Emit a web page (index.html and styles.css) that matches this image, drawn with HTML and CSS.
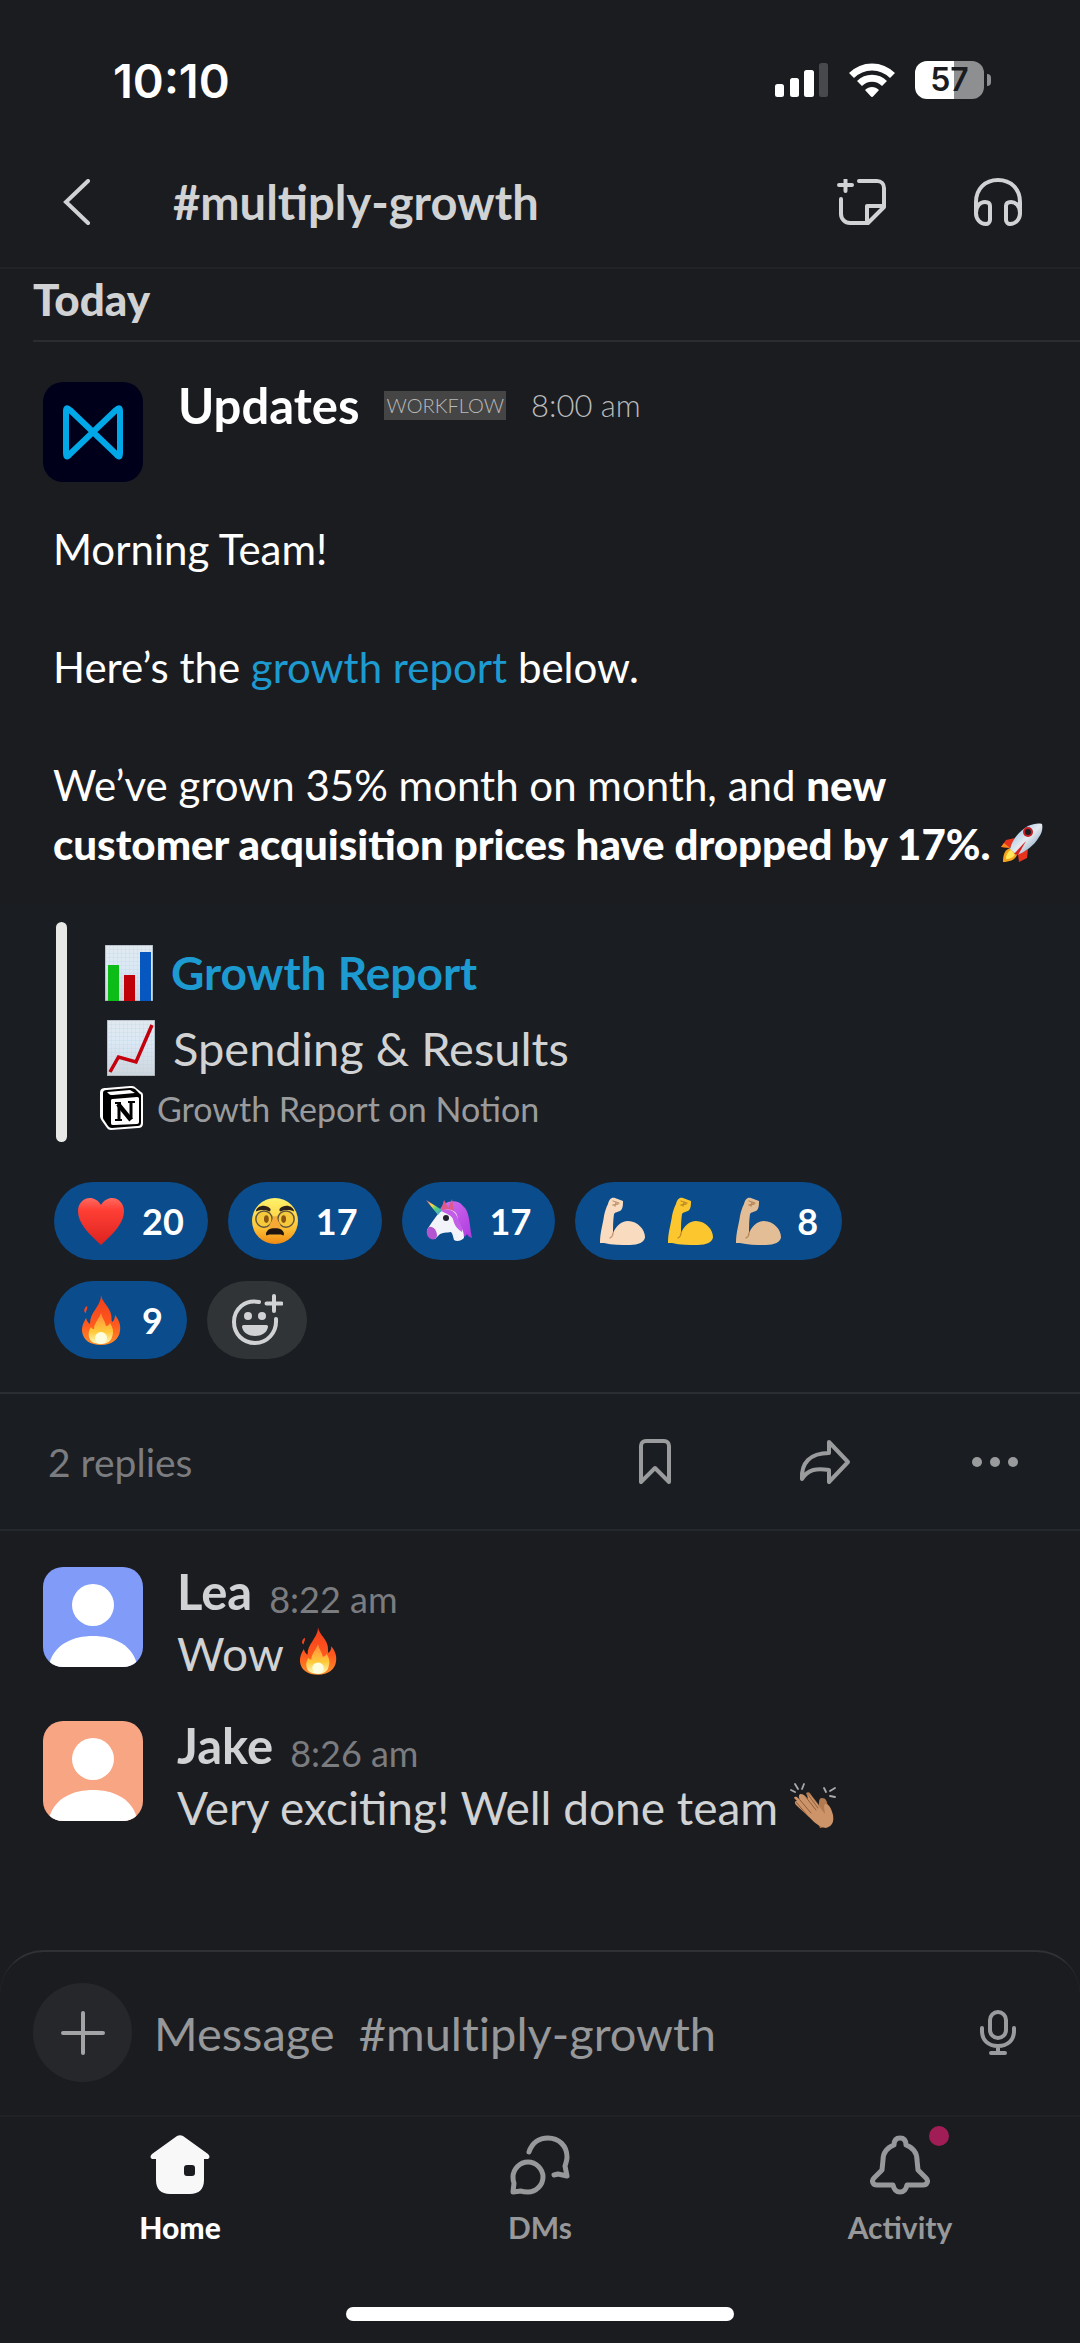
FILE: index.html
```
<!DOCTYPE html>
<html lang="en">

<head>
    <meta charset="UTF-8">
    <meta name="viewport" content="width=device-width, initial-scale=1.0">
    <title>#multiply-growth</title>
    <link rel="stylesheet" href="styles.css">
</head>

<body>

    <!-- Shared emoji drawings -->
    <svg class="defs" aria-hidden="true">
        <defs>
            <linearGradient id="gHeart" x1="0" y1="0" x2="0" y2="1">
                <stop offset="0" stop-color="#ff6a60" />
                <stop offset=".25" stop-color="#ff3f35" />
                <stop offset="1" stop-color="#dc2320" />
            </linearGradient>
            <linearGradient id="gFace" x1="0" y1="0" x2="0" y2="1">
                <stop offset="0" stop-color="#fff36b" />
                <stop offset=".6" stop-color="#ffc93c" />
                <stop offset="1" stop-color="#f08a12" />
            </linearGradient>
            <linearGradient id="gFire" x1="0" y1="0" x2="0" y2="1">
                <stop offset="0" stop-color="#f23c1c" />
                <stop offset=".6" stop-color="#ff5a1e" />
                <stop offset="1" stop-color="#ff8f2a" />
            </linearGradient>
            <linearGradient id="gFlame" x1="0" y1="0" x2="0" y2="1">
                <stop offset="0" stop-color="#ff8a3c" />
                <stop offset=".6" stop-color="#ffc93a" />
                <stop offset="1" stop-color="#fffbc0" />
            </linearGradient>
            <linearGradient id="gMane" x1="0" y1="0" x2="1" y2="1">
                <stop offset="0" stop-color="#d070f0" />
                <stop offset="1" stop-color="#b03ade" />
            </linearGradient>
            <linearGradient id="gHorn" x1="0" y1="0" x2="1" y2="1">
                <stop offset="0" stop-color="#f0609a" />
                <stop offset=".35" stop-color="#ffd84a" />
                <stop offset=".6" stop-color="#4fd07a" />
                <stop offset="1" stop-color="#4a9bf0" />
            </linearGradient>
            <linearGradient id="gRocket" x1="0" y1="0" x2="1" y2="1">
                <stop offset="0" stop-color="#7ab2e6" />
                <stop offset=".5" stop-color="#e6eaee" />
                <stop offset="1" stop-color="#5c87b8" />
            </linearGradient>
            <linearGradient id="gPaper" x1="0" y1="0" x2="0" y2="1">
                <stop offset="0" stop-color="#e2e9ef" />
                <stop offset=".4" stop-color="#dbe9f5" />
                <stop offset="1" stop-color="#ced5dc" />
            </linearGradient>
            <pattern id="gridLines" width="4" height="4" patternUnits="userSpaceOnUse">
                <path d="M4 0H0V4" fill="none" stroke="#b9cfe2" stroke-width=".5" />
            </pattern>
        </defs>

        <symbol id="fire" viewBox="0 0 40 50">
            <path fill="url(#gFire)" d="M20 0c1 7 8 11 10 19 1 3 0 6 1 8 2-1 3-4 3-7 4 5 6 10 5 16-1 8-8 14-19 14S2 45 1 36c0-6 2-9 4-13 1 3 2 5 4 6 0-6 2-10 5-14 3-5 6-9 6-15z" />
            <path fill="#f4461e" d="M6 11c1 3-1 4-1 7-3-1-2-5 1-7z" />
            <path fill="url(#gFlame)" d="M20 18c1 5 4 8 5 13 2 0 3-1 4-3 3 5 4 9 2 14-1 4-5 7-11 7S9 47 8 42c-1-4 0-7 2-10 1 2 2 2 3 2 0-6 5-10 7-16z" />
            <ellipse cx="20" cy="43" rx="6" ry="6" fill="#fffde0" />
        </symbol>

        <symbol id="arm" viewBox="0 0 46 50">
            <path fill="currentColor" d="M1 47C1 36 4 28 5 20c1-5 2-8 4-12 1-4 3-7 7-6l8 3c0 4 0 8-3 10-2 1-5 1-6 3-1 7-1 13-1 19 3-7 8-12 15-12 10 0 17 9 17 16 0 5-7 8-15 8-9 0-18 0-26-2z" />
            <path fill="none" stroke="#8a5420" stroke-opacity=".5" stroke-width="1.300" stroke-linecap="round" d="M14 5l6 2M14 9l5-1M17 6l-1 4M14 37c0 2-1 4-3 5" />
        </symbol>

        <symbol id="person" viewBox="0 0 100 100">
            <circle cx="50" cy="38" r="21" fill="#fff" />
            <path fill="#fff" d="M7 94C13 77 30 69 50 69s37 8 43 25v6H7z" />
        </symbol>
    </svg>

    <div class="screen">

        <!-- Phone status bar -->
        <div class="status-bar">
            <div class="clock">10:10</div>
            <div class="status-icons">
                <svg class="signal" viewBox="0 0 54 34" fill="#fff">
                    <rect x="0" y="21" width="9" height="13" rx="2.5" />
                    <rect x="15" y="15" width="9" height="19" rx="2.5" />
                    <rect x="29" y="7" width="10" height="27" rx="2.5" />
                    <rect x="44" y="0" width="9" height="34" rx="2.5" fill="#48494c" />
                </svg>
                <svg class="wifi" viewBox="0 0 46 34" fill="none" stroke="#fff">
                    <path stroke-width="7" d="M2.500 12.500C14 1 32 1 43.500 12.500" />
                    <path stroke-width="7" d="M10.500 20.500c7-7 18-7 25 0" />
                    <path fill="#fff" stroke="none" d="M16 27c4-4 10-4 14 0l-5.500 6c-1 1.300-2 1.300-3 0z" />
                </svg>
                <div class="battery">57</div>
            </div>
        </div>

        <!-- Channel header -->
        <header class="channel-header">
            <button class="icon-button back" aria-label="Back">
                <svg width="28" height="46" viewBox="0 0 28 46" fill="none" stroke="#d1d2d3" stroke-width="4" stroke-linecap="round">
                    <path d="M25 2L3 23l22 21" />
                </svg>
            </button>
            <h1>#multiply-growth</h1>
            <button class="icon-button" aria-label="New canvas">
                <svg width="50" height="46" viewBox="0 0 50 46" fill="none" stroke="#d1d2d3" stroke-width="4" stroke-linecap="round" stroke-linejoin="round">
                    <path d="M2 6h13M8.500 1v11" />
                    <path d="M22 2H40c4 0 7 3 7 7v19L31 44H13c-5 0-9-4-9-9V20" />
                    <path d="M30 43V27h16" />
                </svg>
            </button>
            <button class="icon-button" aria-label="Huddle">
                <svg width="50" height="48" viewBox="0 0 50 48" fill="none" stroke="#d1d2d3" stroke-width="4" stroke-linecap="round">
                    <path d="M3 35V24C3 11 12 2 25 2s22 9 22 22v11" />
                    <path d="M3 35c0-7 4-11 9-11 3 0 5 1 5 4v14c0 2-2 4-4 4-6 0-10-5-10-11zM47 35c0-7-4-11-9-11-3 0-5 1-5 4v14c0 2 2 4 4 4 6 0 10-5 10-11z" />
                </svg>
            </button>
        </header>

        <main>
            <h2 class="day">Today</h2>

            <article class="post">
                <div class="post-head">
                    <svg class="avatar workflow-avatar" viewBox="0 0 100 100" fill="none" stroke="#00a8e8" stroke-width="6" stroke-linejoin="round">
                        <path d="M27 28c-3-3-4-2-4 1v42c0 4 1 5 4 1l46-44c3-3 4-2 4 1v42c0 4-1 5-4 1z" />
                    </svg>
                    <div class="post-meta">
                        <span class="name post-name">Updates</span>
                        <span class="badge">WORKFLOW</span>
                        <time class="post-time">8:00 am</time>
                    </div>
                </div>

                <div class="post-text">
                    <p>Morning Team!</p>
                    <p>Here’s the <a href="#">growth report</a> below.</p>
                    <p>We’ve grown 35% month on month, and <strong>new customer acquisition prices have dropped by 17%.</strong>
                        <svg class="rocket" viewBox="0 0 42 40">
                            <path fill="#e8341c" d="M14 15L5 17 0 24l9 1zM27 26l-1 9-8 4-1-8z" />
                            <path fill="#f58a1e" d="M0 24l3-4 6 5z" />
                            <path fill="#f5a31e" d="M9 25c-6 2-7 8-7 14 6 0 12-2 14-7z" />
                            <path fill="#ffe95a" d="M10 27c-4 2-5 6-5 9 4 0 8-2 9-5z" />
                            <path fill="url(#gRocket)" d="M9 26c2-9 9-18 18-23 5-2 10-3 14-2 1 4 0 9-3 13-5 9-14 15-22 18z" />
                            <path fill="#d6211e" d="M13 31l12-13-8 14z" />
                            <circle cx="27" cy="9" r="5" fill="#c81e24" />
                            <circle cx="27" cy="9" r="3" fill="#191c22" />
                        </svg>
                    </p>
                </div>
            </article>

            <div class="post-extras">
                <section class="attachment">
                    <div class="attachment-row attachment-title">
                        <svg class="chart" viewBox="0 0 48 56">
                            <path fill="url(#gPaper)" stroke="#8d9499" d="M0 0h48v56H0z" />
                            <path fill="url(#gridLines)" d="M0 0h48v56H0z" />
                            <path fill="#0dbd17" d="M3 20h11v36H3z" />
                            <path fill="#c00008" d="M19 30h11v26H19z" />
                            <path fill="#0757c0" d="M35 7h11v49H35z" />
                        </svg>
                        <a href="#">Growth Report</a>
                    </div>
                    <div class="attachment-row attachment-body">
                        <svg class="chart" viewBox="0 0 48 56">
                            <path fill="url(#gPaper)" stroke="#8d9499" d="M0 0h48v56H0z" />
                            <path fill="url(#gridLines)" d="M0 0h48v56H0z" />
                            <path fill="none" stroke="#c3000c" stroke-width="3.500" d="M3 52l8.500-15L29 42 45 5" />
                        </svg>
                        <span>Spending &amp; Results</span>
                    </div>
                    <div class="attachment-row attachment-source">
                        <svg class="notion" viewBox="0 0 43 44">
                            <path fill="#fff" d="M0 7c0-4 2-5 6-5l24-2c3 0 4 0 6 2l5 4c2 1 2 2 2 5v26c0 4-2 5-5 5l-27 2c-2 0-3-1-4-2l-5-7c-1-2-2-3-2-5z" />
                            <path fill="#000" d="M3 7c0-2 1-3 4-3l23-2c2 0 3 0 5 1l5 5c1 0 1 1 1 3v25c0 3-1 4-4 4l-25 2c-2 0-3-1-4-2l-4-6c-1-1-1-2-1-4z" />
                            <path fill="#fff" d="M7 6l23-2 5 3-22 2c-2 0-3 0-4-1zM11 15c0-2 1-2 2-2l24-2c2 0 2 1 2 2v23c0 1-1 2-2 2l-23 1c-2 0-3 0-3-2z" />
                            <path fill="none" stroke="#000" stroke-width="3" d="M19 33V18M31 16v17" />
                            <path fill="none" stroke="#000" stroke-width="4.500" d="M18 18l13 16" />
                            <path fill="none" stroke="#000" stroke-width="2" d="M15 17h6M28 16h7M15 34h7" />
                        </svg>
                        <span>Growth Report on Notion</span>
                    </div>
                </section>

                <div class="reactions">
                    <button class="reaction">
                        <svg viewBox="0 0 46 50">
                            <path fill="url(#gHeart)" d="M23 9C26 4 30 2 34 2c7 0 12 6 12 13 0 12-10 22-23 34C10 37 0 27 0 15 0 8 5 2 12 2c4 0 8 2 11 7z" />
                        </svg>
                        20
                    </button>
                    <button class="reaction">
                        <svg viewBox="0 0 48 48">
                            <circle cx="24" cy="24" r="24" fill="url(#gFace)" />
                            <circle cx="12.500" cy="22" r="8.500" fill="#f6c93c" stroke="#5f553c" stroke-width="1.500" />
                            <circle cx="35.500" cy="22" r="8.500" fill="#f6c93c" stroke="#5f553c" stroke-width="1.500" />
                            <ellipse cx="15" cy="22" rx="2.500" ry="4" fill="#8a5412" />
                            <ellipse cx="33" cy="22" rx="2.500" ry="4" fill="#8a5412" />
                            <path fill="#2d221b" d="M4 14C5 8 14 6 19 11c1 2 0 3-1 3-5-2-8-2-14 0zM44 14C43 8 34 6 29 11c-1 2 0 3 1 3 5-2 8-2 14 0z" />
                            <path fill="#f7a935" d="M22 19h4c0 5 4 7 4 11 0 3-3 4-6 4s-6-1-6-4c0-4 4-6 4-11z" />
                            <path fill="#1f1612" d="M17 33c4-2 10-2 14 0 2 2 3 4 2 6-2-1-4-1-6-1h-6c-2 0-4 0-6 1-1-2 0-4 2-6z" />
                        </svg>
                        17
                    </button>
                    <button class="reaction">
                        <svg viewBox="0 0 46 48">
                            <path fill="url(#gMane)" d="M14 13C17 4 31 1 37 9c7 5 6 18 9 32-3-1-4-2-5-4l-2 3-12-16z" />
                            <path fill="#e05a86" d="M15 13l3-10 5 9zM22 12l4-10 2 12z" />
                            <path fill="#f3f3fa" d="M12 17c4-5 12-6 17-2 4 4 2 10 5 14 3 3 4 8 4 12-3 3-7 4-10 2-1-3-1-6-3-8-4 1-9 0-12 3l-4 4C5 41 1 38 1 33c3-5 7-11 11-16z" />
                            <path fill="#b455d0" d="M3 30c4-1 8 3 8 9-1 3-3 4-6 3-3-1-5-5-4-9z" />
                            <path fill="#c35ee6" d="M15 14c9-4 15 1 17 8 1 4 5 7 4 13-6-4-8-8-9-13-2-4-6-5-12-8z" />
                            <path fill="url(#gHorn)" d="M0 3l16 10-4 5z" />
                            <circle cx="20" cy="21" r="3" fill="#231f2e" />
                        </svg>
                        17
                    </button>
                    <button class="reaction reaction-arms">
                        <span class="arms">
                            <svg class="tone-light"><use href="#arm" /></svg>
                            <svg class="tone-yellow"><use href="#arm" /></svg>
                            <svg class="tone-medium"><use href="#arm" /></svg>
                        </span>
                        8
                    </button>
                    <button class="reaction">
                        <svg><use href="#fire" /></svg>
                        9
                    </button>
                    <button class="reaction add-reaction" aria-label="Add reaction">
                        <svg viewBox="0 0 52 52" fill="none" stroke="#d1d2d3" stroke-width="4" stroke-linecap="round">
                            <path d="M28 8C14 5 3 15 3 28c0 12 9 21 21 21s22-10 21-24" />
                            <path d="M43 2v15M35.500 9.500h15" />
                            <path fill="#d1d2d3" stroke="none" d="M13 31h22c2 0 2 1 2 2-1 6-7 9-13 9s-12-3-13-9c0-1 0-2 2-2z" />
                            <circle cx="17" cy="22" r="4" fill="#d1d2d3" stroke="none" />
                            <circle cx="31" cy="22" r="4" fill="#d1d2d3" stroke="none" />
                        </svg>
                    </button>
                </div>

                <div class="actions">
                    <span class="replies-count">2 replies</span>
                    <button class="icon-button" aria-label="Save">
                        <svg width="34" height="46" viewBox="0 0 34 46" fill="none" stroke="#9a9b9d" stroke-width="4" stroke-linejoin="round">
                            <path d="M3 43V7c0-3 2-5 5-5h18c3 0 5 2 5 5v36L17 29z" />
                        </svg>
                    </button>
                    <button class="icon-button" aria-label="Share">
                        <svg width="52" height="46" viewBox="0 0 52 46" fill="none" stroke="#9a9b9d" stroke-width="4" stroke-linejoin="round">
                            <path d="M30 3l19 20-19 20V31c-12-2-21-1-27 9C2 24 11 14 30 14z" />
                        </svg>
                    </button>
                    <button class="icon-button" aria-label="More">
                        <svg width="48" height="46" viewBox="0 0 48 46" fill="#9a9b9d">
                            <circle cx="6" cy="23" r="5" />
                            <circle cx="24" cy="23" r="5" />
                            <circle cx="42" cy="23" r="5" />
                        </svg>
                    </button>
                </div>
            </div>

            <section class="replies">
                <article class="reply">
                    <svg class="avatar avatar-lea"><use href="#person" /></svg>
                    <div>
                        <div class="reply-meta"><span class="name">Lea</span><time>8:22 am</time></div>
                        <p>Wow <svg class="reply-fire"><use href="#fire" /></svg></p>
                    </div>
                </article>
                <article class="reply">
                    <svg class="avatar avatar-jake"><use href="#person" /></svg>
                    <div>
                        <div class="reply-meta"><span class="name">Jake</span><time>8:26 am</time></div>
                        <p>Very exciting! Well done team
                            <svg class="reply-clap" viewBox="0 0 46 46">
                                <path fill="none" stroke="#a9aaad" stroke-width="1.800" stroke-linecap="round" d="M1 7l4 2M5 1l3 5M14 1l-2 5M45 5l-5 3M40 13l5 1M36 9l-2-4" />
                                <path fill="#b27a50" d="M16 10c3-2 4 0 6 3l7 9c0-4 0-7 3-7 4 0 5 3 6 9l2 12c-1 5-6 9-10 9z" />
                                <path fill="#cc9468" d="M4 15c1-2 3-1 4 0l2 2c-2-4-1-6 1-6s3 1 4 2l3 3c-1-4 1-5 3-3l14 18c0-3-2-8 0-10 4-1 7 6 8 11 1 6 0 11-7 13-7-1-12-6-17-11L6 22c-2-3-1-4 1-4z" />
                                <path fill="none" stroke="#8f5c38" stroke-width="1" stroke-linecap="round" d="M10 17l11 13M15 13l11 14M6 19l11 13M19 13l9 12" />
                            </svg>
                        </p>
                    </div>
                </article>
            </section>
        </main>

        <!-- Composer and tabs -->
        <footer>
            <div class="composer">
                <button class="attach" aria-label="Attach">
                    <svg width="44" height="44" viewBox="0 0 44 44" fill="none" stroke="#a3a4a6" stroke-width="4" stroke-linecap="round">
                        <path d="M22 2v40M2 22h40" />
                    </svg>
                </button>
                <input type="text" aria-label="Message" placeholder="Message  #multiply-growth">
                <button class="icon-button" aria-label="Record audio">
                    <svg width="38" height="46" viewBox="0 0 38 46" fill="none" stroke="#9a9b9d" stroke-width="4" stroke-linecap="round">
                        <rect x="11" y="2" width="16" height="26" rx="8" />
                        <path d="M3 18v3c0 9 6 15 16 15s16-6 16-15v-3M19 36v7M12 43h14" />
                    </svg>
                </button>
            </div>

            <nav class="tabs">
                <a href="#" class="tab active">
                    <svg viewBox="0 0 60 60" fill="#f8f8f8">
                        <path fill-rule="evenodd" d="M27 1c2-1 4-1 6 0l25 18c2 2 2 4 0 5h-4v21c0 9-5 14-14 14H20C11 59 6 54 6 45V24H2c-2-1-2-3 0-5zM37 30c-2 0-3 1-3 3v5c0 2 1 3 3 3h5c2 0 3-1 3-3v-5c0-2-1-3-3-3z" />
                    </svg>
                    Home
                </a>
                <a href="#" class="tab">
                    <svg viewBox="0 0 60 60" fill="none" stroke="#97989a" stroke-width="5" stroke-linecap="round" stroke-linejoin="round">
                        <path d="M19 17C22 8 29 3 38 3c11 0 19 8 19 19 0 3-1 6-2 9l2 10-9-2-4 1" />
                        <path d="M18 27c8 0 15 7 15 15s-7 15-15 15c-3 0-5 0-7-1l-8 1 1-9c-1-2-1-4-1-6 0-8 7-15 15-15z" />
                    </svg>
                    DMs
                </a>
                <a href="#" class="tab">
                    <svg viewBox="0 0 60 60" fill="none" stroke="#97989a" stroke-width="5" stroke-linecap="round" stroke-linejoin="round">
                        <path d="M24 10c0-5 2-7 6-7s6 2 6 7c8 3 11 9 11 15l1 10 8 8c3 3 1 7-3 7H37c-1 5-3 7-7 7s-6-2-7-7H7c-4 0-6-4-3-7l8-8 1-10c0-6 3-12 11-15z" />
                    </svg>
                    Activity
                    <span class="unread-dot"></span>
                </a>
            </nav>

            <div class="home-indicator"></div>
        </footer>
    </div>

</body>

</html>
```

FILE: styles.css
```
* {
    box-sizing: border-box;
}

body {
    margin: 0;
    background-color: #1b1c20;
    color: #d1d2d3;
    font-family: Lato, "Liberation Sans", sans-serif;
}

h1,
h2,
p {
    margin: 0;
}

a {
    color: #1d9bd1;
    text-decoration: none;
}

svg {
    display: block;
    flex-shrink: 0;
}

button {
    border: none;
    background: none;
    padding: 0;
    font-family: inherit;
    color: inherit;
    cursor: pointer;
}

.defs {
    position: absolute;
    width: 0;
    height: 0;
}

.screen {
    min-height: 100vh;
    display: flex;
    flex-direction: column;
}

/* Status bar */
.status-bar {
    display: flex;
    justify-content: space-between;
    align-items: center;
    padding: 52px 88px 0 113px;
    height: 108px;
    color: #fff;
    font-family: Inter, sans-serif;
    font-weight: 600;
}

.clock {
    font-size: 47px;
}

.status-icons {
    display: flex;
    align-items: center;
    gap: 20px;
}

.signal {
    width: 54px;
    height: 34px;
}

.wifi {
    width: 46px;
    height: 34px;
}

.battery {
    position: relative;
    width: 69px;
    height: 38px;
    margin-right: 8px;
    border-radius: 12px;
    background: linear-gradient(to right, #fff 57%, #8e8f91 57%);
    color: #1b1c20;
    font-size: 32px;
    line-height: 38px;
    text-align: center;
}

.battery::after {
    content: "";
    position: absolute;
    right: -7px;
    top: 13px;
    width: 4px;
    height: 12px;
    border-radius: 0 4px 4px 0;
    background-color: #8e8f91;
}

/* Channel header */
.channel-header {
    display: flex;
    align-items: center;
    gap: 86px;
    height: 161px;
    padding: 28px 57px 0 63px;
    border-bottom: 2px solid #222327;
}

.channel-header h1 {
    flex: 1;
    margin-left: -4px;
    font-size: 47px;
    font-weight: 700;
    line-height: 60px;
}

/* Day heading */
.day {
    margin-left: 33px;
    padding-bottom: 11px;
    border-bottom: 2px solid #2b2c30;
    font-family: "Lato Black", Lato, sans-serif;
    font-size: 44px;
    font-weight: 900;
    line-height: 60px;
}

/* Main post */
.avatar {
    width: 100px;
    height: 100px;
    border-radius: 20px;
}

.workflow-avatar {
    background-color: #00001a;
}

.name {
    font-size: 49px;
    font-weight: 700;
}

.post {
    color: #fff;
}

.post-head {
    display: flex;
    gap: 35px;
    padding: 40px 43px 0;
}

.post-meta {
    display: flex;
    align-items: center;
    gap: 25px;
    height: 46px;
}

.badge {
    padding: 0 2px;
    background-color: #454545;
    color: #b9babb;
    font-size: 20px;
    font-weight: 300;
    line-height: 29px;
}

.post-time {
    color: #b9babb;
    font-size: 31px;
    font-weight: 300;
}

.post-text {
    display: flex;
    flex-direction: column;
    gap: 59px;
    padding: 38px 24px 30px 53px;
    font-size: 42px;
    line-height: 59px;
}

.post-text strong {
    font-family: "Lato Black", Lato, sans-serif;
    font-weight: 900;
}

.rocket {
    display: inline-block;
    width: 42px;
    height: 40px;
    vertical-align: -3px;
}

.post-extras {
    padding-top: 18px;
    background-color: #1a1d21;
}

.attachment {
    position: relative;
    display: flex;
    flex-direction: column;
    margin: 0 54px;
    padding: 13px 0 11px 46px;
}

.attachment::before {
    content: "";
    position: absolute;
    left: 2px;
    top: 0;
    bottom: 0;
    width: 11px;
    border-radius: 6px;
    background-color: #e8e8e6;
}

.attachment-row {
    display: flex;
    align-items: center;
}

.attachment-title {
    gap: 18px;
    height: 75px;
    padding-left: 5px;
    font-size: 46px;
    font-weight: 700;
}

.attachment-body {
    gap: 18px;
    height: 75px;
    padding-left: 7px;
    font-size: 47px;
}

.attachment-source {
    gap: 14px;
    height: 46px;
    color: #9a9b9d;
    font-size: 34px;
}

.chart {
    width: 48px;
    height: 56px;
}

.notion {
    width: 43px;
    height: 44px;
}

/* Reactions */
.reactions {
    display: flex;
    flex-wrap: wrap;
    gap: 21px 20px;
    padding: 40px 160px 33px 54px;
}

.reaction {
    display: flex;
    align-items: center;
    gap: 18px;
    height: 78px;
    padding: 0 24px;
    border-radius: 39px;
    background-color: #0b4c8c;
    color: #fff;
    font-size: 36px;
    font-weight: 700;
}

.reaction svg {
    width: 46px;
    height: 50px;
}

.reaction-arms {
    gap: 16px;
}

.arms {
    display: flex;
    gap: 22px;
}

.tone-light {
    color: #f9dcc0;
}

.tone-yellow {
    color: #fbc62e;
}

.tone-medium {
    color: #e2bd95;
}

.add-reaction {
    background-color: #313437;
}

.add-reaction svg {
    width: 52px;
    height: 52px;
}

/* Replies bar */
.actions {
    display: flex;
    align-items: center;
    gap: 118px;
    height: 139px;
    padding: 0 59px 0 48px;
    border-top: 2px solid #2a2d31;
    border-bottom: 2px solid #25282c;
}

.actions .icon-button {
    display: flex;
    justify-content: center;
    width: 52px;
}

.replies-count {
    flex: 1;
    color: #7b7c7f;
    font-size: 39px;
}

/* Replies */
.replies {
    display: flex;
    flex-direction: column;
    gap: 54px;
    padding: 36px 43px;
}

.reply {
    display: flex;
    gap: 34px;
    height: 100px;
}

.avatar-lea {
    background-color: #819cf8;
}

.avatar-jake {
    background-color: #f8a583;
}

.reply-meta {
    height: 48px;
    line-height: 48px;
}

.reply time {
    margin-left: 17px;
    color: #7b7c7f;
    font-size: 36px;
    vertical-align: -3px;
}

.reply p {
    font-size: 46px;
    line-height: 78px;
}

.reply p svg {
    display: inline-block;
    vertical-align: -4px;
}

.reply .reply-fire {
    width: 38px;
    height: 48px;
    margin-left: 4px;
}

.reply-clap {
    width: 46px;
    height: 46px;
}

/* Composer */
footer {
    margin-top: auto;
}

.composer {
    display: flex;
    align-items: center;
    gap: 22px;
    height: 165px;
    padding: 0 63px 2px 33px;
    border-top: 2px solid #303135;
    border-radius: 44px 44px 0 0;
}

.attach {
    display: flex;
    align-items: center;
    justify-content: center;
    width: 99px;
    height: 99px;
    border-radius: 50%;
    background-color: #26272b;
}

.composer input {
    flex: 1;
    min-width: 0;
    padding: 0;
    border: none;
    outline: none;
    background: none;
    color: #d1d2d3;
    font-family: inherit;
    font-size: 47px;
    font-variant-ligatures: none;
}

.composer input::placeholder {
    color: #97989a;
    opacity: 1;
}

/* Bottom tabs */
.tabs {
    display: grid;
    grid-template-columns: repeat(3, 1fr);
    padding-top: 18px;
    border-top: 2px solid #202125;
}

.tab {
    position: relative;
    display: flex;
    flex-direction: column;
    align-items: center;
    gap: 13px;
    color: #97989a;
    font-size: 30px;
    font-weight: 700;
    line-height: 38px;
}

.tab.active {
    color: #fff;
    font-family: "Lato Black", Lato, sans-serif;
    font-weight: 900;
}

.tab svg {
    width: 60px;
    height: 60px;
}

.unread-dot {
    position: absolute;
    top: -9px;
    left: calc(50% + 29px);
    width: 20px;
    height: 20px;
    border-radius: 50%;
    background-color: #a01e55;
}

.home-indicator {
    width: 36%;
    height: 14px;
    margin: 61px auto 22px;
    border-radius: 7px;
    background-color: #fff;
}
```
